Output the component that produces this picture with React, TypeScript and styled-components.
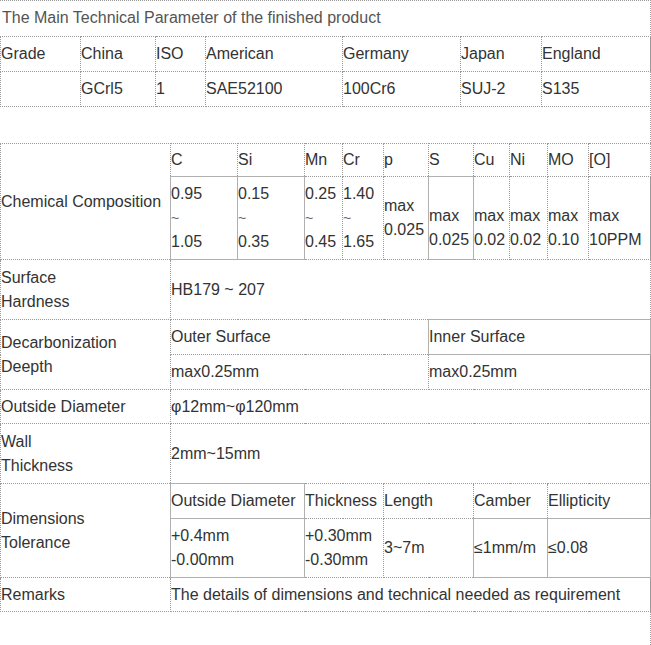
import React from "react";
import styled, { createGlobalStyle } from "styled-components";

const Global = createGlobalStyle`
  html, body { margin: 0; padding: 0; background: #fff; }
  body { font-family: "Liberation Sans", Arial, sans-serif; font-size: 16px; }
`;

const Page = styled.div`
  width: 651px;
  min-height: 645px;
  box-sizing: border-box;
  border-top: 1px dotted #9a9a9a;
  border-right: 1px dotted #9a9a9a;
`;

const Title = styled.div`
  height: 35px;
  box-sizing: border-box;
  padding: 5px 2px 0;
  line-height: 24px;
  color: #555;
`;

const Table = styled.table<{ $mb?: number }>`
  width: 650px;
  table-layout: fixed;
  border-collapse: collapse;
  color: #333;
  margin-bottom: ${(p) => p.$mb ?? 0}px;
`;

const Row = styled.tr<{ $h: number }>`
  height: ${(p) => p.$h}px;
`;

const Cell = styled.td<{ $pt?: number; $solid?: boolean }>`
  border: 1px ${(p) => (p.$solid ? "solid #b0b0b0" : "dotted #9a9a9a")};
  padding: ${(p) => p.$pt ?? 0}px 1px 0 0;
  line-height: 24px;
  vertical-align: middle;
  white-space: nowrap;
  overflow: hidden;
`;

const Tilde = styled.span`
  display: block;
  color: #666;
  font-size: 14px;
`;

const Col = styled.col<{ $w: number }>`
  width: ${(p) => p.$w}px;
`;

const gradeCols = [80, 75, 50, 137, 118, 81, 109];
const chemCols = [170, 67, 67, 38, 41, 45, 45, 36, 38, 41, 62];

const Range = ({ a, b }: { a: string; b: string }) => (
  <>
    {a}
    <Tilde>~</Tilde>
    {b}
  </>
);

export default function App() {
  return (
    <>
      <Global />
      <Page>
        <Title>The Main Technical Parameter of the finished product</Title>
        <Table $mb={36}>
          <colgroup>
            {gradeCols.map((w, i) => (
              <Col key={i} $w={w} />
            ))}
          </colgroup>
          <tbody>
            <Row $h={35}>
              <Cell>Grade</Cell>
              <Cell>China</Cell>
              <Cell>ISO</Cell>
              <Cell>American</Cell>
              <Cell>Germany</Cell>
              <Cell>Japan</Cell>
              <Cell>England</Cell>
            </Row>
            <Row $h={35}>
              <Cell></Cell>
              <Cell>GCrl5</Cell>
              <Cell>1</Cell>
              <Cell>SAE52100</Cell>
              <Cell>100Cr6</Cell>
              <Cell>SUJ-2</Cell>
              <Cell>S135</Cell>
            </Row>
          </tbody>
        </Table>
        <Table>
          <colgroup>
            {chemCols.map((w, i) => (
              <Col key={i} $w={w} />
            ))}
          </colgroup>
          <tbody>
            <Row $h={33}>
              <Cell rowSpan={2}>Chemical Composition</Cell>
              <Cell>C</Cell>
              <Cell>Si</Cell>
              <Cell>Mn</Cell>
              <Cell>Cr</Cell>
              <Cell>p</Cell>
              <Cell>S</Cell>
              <Cell>Cu</Cell>
              <Cell>Ni</Cell>
              <Cell>MO</Cell>
              <Cell>[O]</Cell>
            </Row>
            <Row $h={83}>
              <Cell $solid>
                <Range a="0.95" b="1.05" />
              </Cell>
              <Cell $solid>
                <Range a="0.15" b="0.35" />
              </Cell>
              <Cell>
                <Range a="0.25" b="0.45" />
              </Cell>
              <Cell>
                <Range a="1.40" b="1.65" />
              </Cell>
              <Cell>
                max
                <br />
                0.025
              </Cell>
              <Cell $pt={19} $solid>
                max
                <br />
                0.025
              </Cell>
              <Cell $pt={19}>
                max
                <br />
                0.02
              </Cell>
              <Cell $pt={19}>
                max
                <br />
                0.02
              </Cell>
              <Cell $pt={19}>
                max
                <br />
                0.10
              </Cell>
              <Cell $pt={19}>
                max
                <br />
                10PPM
              </Cell>
            </Row>
            <Row $h={60}>
              <Cell>
                Surface
                <br />
                Hardness
              </Cell>
              <Cell colSpan={10}>HB179 ~ 207</Cell>
            </Row>
            <Row $h={35}>
              <Cell rowSpan={2}>
                Decarbonization
                <br />
                Deepth
              </Cell>
              <Cell colSpan={5}>Outer Surface</Cell>
              <Cell colSpan={5} $solid>
                Inner Surface
              </Cell>
            </Row>
            <Row $h={35}>
              <Cell colSpan={5}>max0.25mm</Cell>
              <Cell colSpan={5}>max0.25mm</Cell>
            </Row>
            <Row $h={34}>
              <Cell>Outside Diameter</Cell>
              <Cell colSpan={10}>φ12mm~φ120mm</Cell>
            </Row>
            <Row $h={60}>
              <Cell>
                Wall
                <br />
                Thickness
              </Cell>
              <Cell colSpan={10}>2mm~15mm</Cell>
            </Row>
            <Row $h={35}>
              <Cell rowSpan={2}>
                Dimensions
                <br />
                Tolerance
              </Cell>
              <Cell colSpan={2} $solid>
                Outside Diameter
              </Cell>
              <Cell colSpan={2}>Thickness</Cell>
              <Cell colSpan={2}>Length</Cell>
              <Cell colSpan={2}>Camber</Cell>
              <Cell colSpan={2}>Ellipticity</Cell>
            </Row>
            <Row $h={59}>
              <Cell colSpan={2} $solid>
                +0.4mm
                <br />
                -0.00mm
              </Cell>
              <Cell colSpan={2}>
                +0.30mm
                <br />
                -0.30mm
              </Cell>
              <Cell colSpan={2}>3~7m</Cell>
              <Cell colSpan={2} $solid>
                ≤1mm/m
              </Cell>
              <Cell colSpan={2} $solid>
                ≤0.08
              </Cell>
            </Row>
            <Row $h={34}>
              <Cell>Remarks</Cell>
              <Cell colSpan={10}>
                The details of dimensions and technical needed as requirement
              </Cell>
            </Row>
          </tbody>
        </Table>
      </Page>
    </>
  );
}
